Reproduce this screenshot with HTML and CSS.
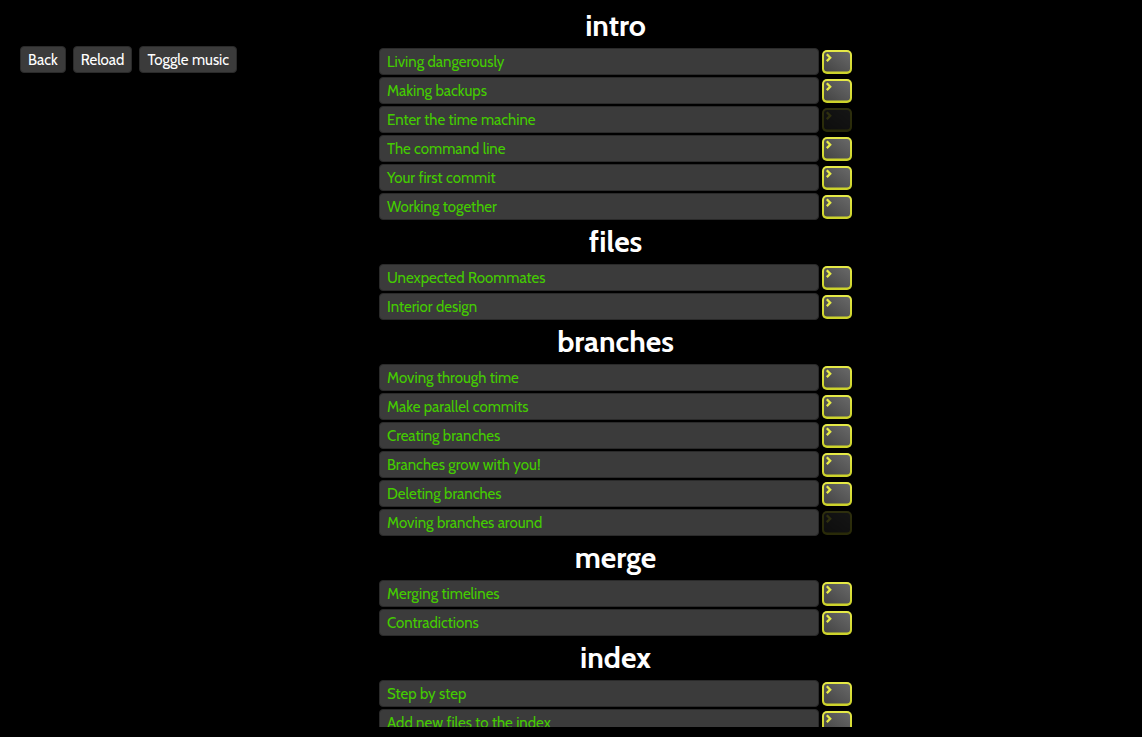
FILE: index.html
```
<!DOCTYPE html>
<html lang="en">
<head>
<meta charset="utf-8">
<title>Levels</title>
<link rel="stylesheet" href="styles.css">
<script src="levels.js" defer></script>
</head>
<body>
<svg class="defs" aria-hidden="true">
  <defs>
    <linearGradient id="screen" x1="0" y1="1" x2="1" y2="0">
      <stop offset="0" stop-color="#444"/>
      <stop offset="1" stop-color="#686868"/>
    </linearGradient>
    <linearGradient id="rim" x1="0" y1="0" x2="0" y2="1">
      <stop offset="0" stop-color="#e6ea48"/>
      <stop offset="1" stop-color="#ccd22a"/>
    </linearGradient>
    <symbol id="terminal" viewBox="0 0 30 24">
      <rect x="0" y="0" width="30" height="24" rx="5" fill="url(#rim)"/>
      <rect x="2" y="2" width="26" height="19.5" rx="3" fill="url(#screen)"/>
      <path d="M4.8 4.3 L8.2 7.7 L4.8 11.1" fill="none" stroke="#e6ea48" stroke-width="2.3"/>
    </symbol>
  </defs>
</svg>
<div class="screen">
  <nav class="toolbar">
    <button class="button" type="button">Back</button>
    <button class="button" type="button">Reload</button>
    <button class="button" type="button">Toggle music</button>
  </nav>
  <main class="levels" id="levels"></main>
</div>
</body>
</html>
```
FILE: styles.css
```
* {
  box-sizing: border-box;
}

body {
  margin: 0;
  background: #000;
  color: #fff;
  font: 15px/20px Cabin, Lato, sans-serif;
}

.defs {
  position: absolute;
  width: 0;
  height: 0;
}

.screen {
  display: grid;
  grid-template-columns: minmax(240px, 369fr) minmax(0, 473px) 280fr;
  height: 100vh;
  padding: 10px;
}

.toolbar {
  display: flex;
  align-items: flex-start;
  gap: 7px;
  padding: 36px 0 0 10px;
}

.button,
.level {
  height: 27px;
  padding: 0 7px;
  border: 1px solid #2a2a2a;
  border-radius: 4px;
  background: #3b3b3b;
  color: #fff;
  font: inherit;
  white-space: nowrap;
  cursor: pointer;
}

.levels {
  display: flex;
  flex-direction: column;
  gap: 6px;
  min-height: 0;
  overflow-y: auto;
  scrollbar-width: none;
}

.chapter {
  flex: none;
}

.title {
  margin: 0 0 6px;
  font-size: 30px;
  font-weight: 700;
  line-height: 32px;
  text-align: center;
}

.list {
  display: grid;
  gap: 2px;
  margin: 0;
  padding: 0;
  list-style: none;
}

.row {
  display: flex;
  align-items: center;
  gap: 3px;
}

.level {
  flex: 1;
  color: #4c0;
  text-align: left;
}

.badge {
  display: block;
  width: 30px;
  height: 24px;
}

.badge-off {
  opacity: 0.2;
}
```
FILE: levels.js
```
const chapters = [
  ["intro", ["Living dangerously", "Making backups", "Enter the time machine", "The command line", "Your first commit", "Working together"]],
  ["files", ["Unexpected Roommates", "Interior design"]],
  ["branches", ["Moving through time", "Make parallel commits", "Creating branches", "Branches grow with you!", "Deleting branches", "Moving branches around"]],
  ["merge", ["Merging timelines", "Contradictions"]],
  ["index", ["Step by step", "Add new files to the index"]]
];
const withoutBadge = new Set(["Enter the time machine", "Moving branches around"]);

document.getElementById("levels").innerHTML = chapters.map(([title, levels]) => `
  <section class="chapter">
    <h2 class="title">${title}</h2>
    <ul class="list">${levels.map(name => `
      <li class="row">
        <button class="level" type="button">${name}</button>
        <svg class="badge${withoutBadge.has(name) ? " badge-off" : ""}" aria-hidden="true"><use href="#terminal"/></svg>
      </li>`).join("")}
    </ul>
  </section>`).join("");
```
